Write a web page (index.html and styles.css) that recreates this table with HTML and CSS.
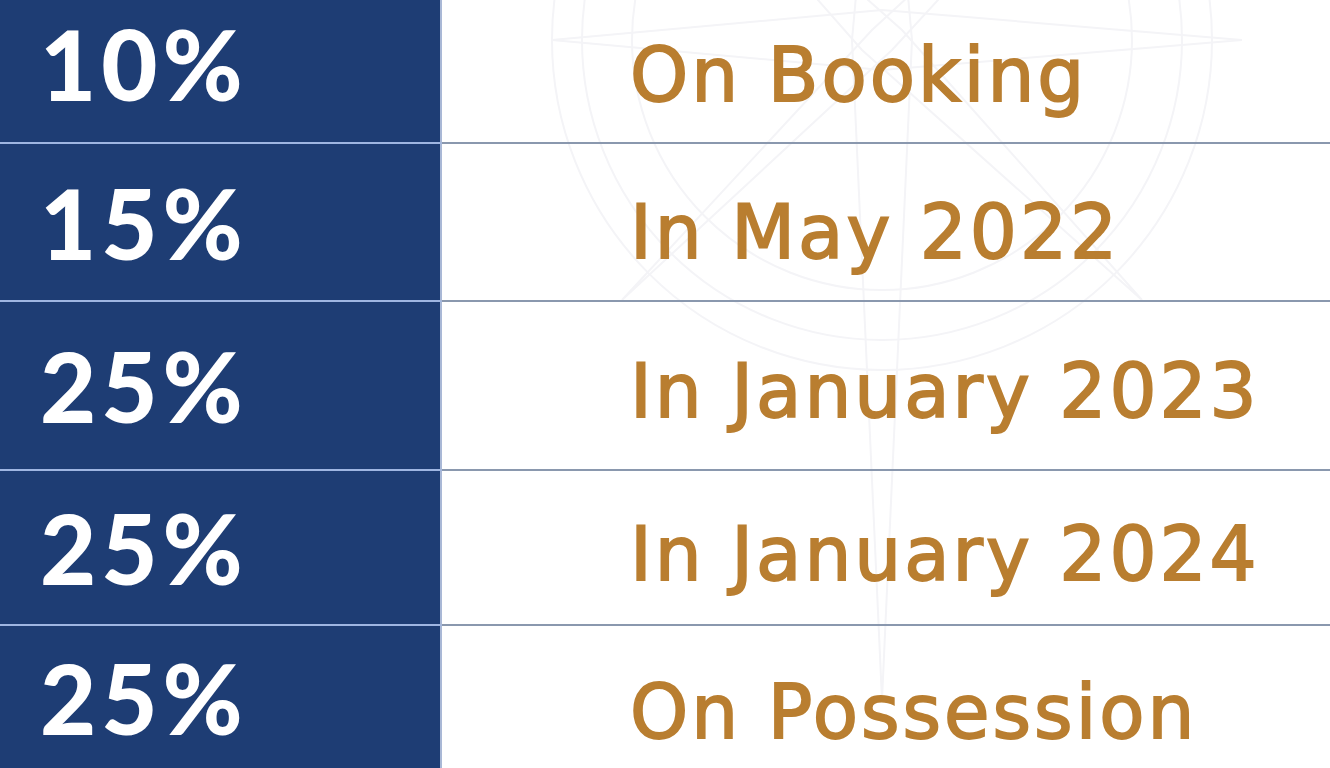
FILE: index.html
```html
<!DOCTYPE html>
<html lang="en">
<head>
<meta charset="utf-8">
<title>Payment Plan</title>
<link rel="stylesheet" href="styles.css">
</head>
<body>
<div class="plan">
  <svg class="watermark" width="888" height="768" viewBox="0 0 888 768" aria-hidden="true">
    <g fill="none" stroke="#f4f4f7" stroke-width="2">
      <circle cx="440" cy="40" r="330"/>
      <circle cx="440" cy="40" r="300"/>
      <circle cx="440" cy="40" r="250"/>
      <path d="M440 -290 L470 40 L440 700 L410 40 Z"/>
      <path d="M110 40 L440 10 L800 40 L440 70 Z"/>
      <path d="M200 -200 L460 30 L700 300 L420 50 Z"/>
      <path d="M680 -200 L450 50 L180 300 L430 30 Z"/>
    </g>
  </svg>
  <div class="row r1"><div class="pct">10%</div><div class="desc">On Booking</div></div>
  <div class="row r2"><div class="pct">15%</div><div class="desc">In May 2022</div></div>
  <div class="row r3"><div class="pct">25%</div><div class="desc">In January 2023</div></div>
  <div class="row r4"><div class="pct">25%</div><div class="desc">In January 2024</div></div>
  <div class="row r5"><div class="pct">25%</div><div class="desc">On Possession</div></div>
</div>
</body>
</html>
```
FILE: styles.css
```css
html, body {
  margin: 0;
  padding: 0;
  background: #ffffff;
}
.plan {
  position: relative;
  width: 1330px;
  height: 768px;
  overflow: hidden;
  display: flex;
  flex-direction: column;
}
.watermark {
  position: absolute;
  left: 442px;
  top: 0;
  z-index: 0;
}
.row {
  display: flex;
  position: relative;
  z-index: 1;
}
.r1 { height: 144px; }
.r2 { height: 158px; }
.r3 { height: 169px; }
.r4 { height: 155px; }
.r5 { height: 142px; }
.r1 .pct { padding-bottom: 16px; }
.r1 .desc { padding-top: 8px; }
.r2 .desc { padding-top: 20px; }
.r3 .desc { padding-top: 10px; }
.r4 .desc { padding-top: 12px; }
.r5 .desc { padding-top: 30px; }
.row:not(.r5) .pct { border-bottom: 2px solid #9fb6e2; }
.row:not(.r5) .desc { border-bottom: 2px solid #8a98ae; }
.pct {
  width: 442px;
  flex: none;
  box-sizing: border-box;
  background: #1e3d74;
  color: #ffffff;
  font-family: Lato, "Liberation Sans", sans-serif;
  font-weight: 900;
  font-size: 97px;
  letter-spacing: 5px;
  display: flex;
  align-items: center;
  padding-left: 40px;
  border-right: 2px solid #a9b8d6;
}
.desc {
  flex: 1;
  box-sizing: border-box;
  display: flex;
  align-items: center;
  padding-left: 188px;
  color: #b97e30;
  font-family: "DejaVu Sans", Verdana, sans-serif;
  font-weight: 400;
  font-size: 74px;
  letter-spacing: 3px;
  -webkit-text-stroke: 1.8px #b97e30;
  white-space: nowrap;
}
```
